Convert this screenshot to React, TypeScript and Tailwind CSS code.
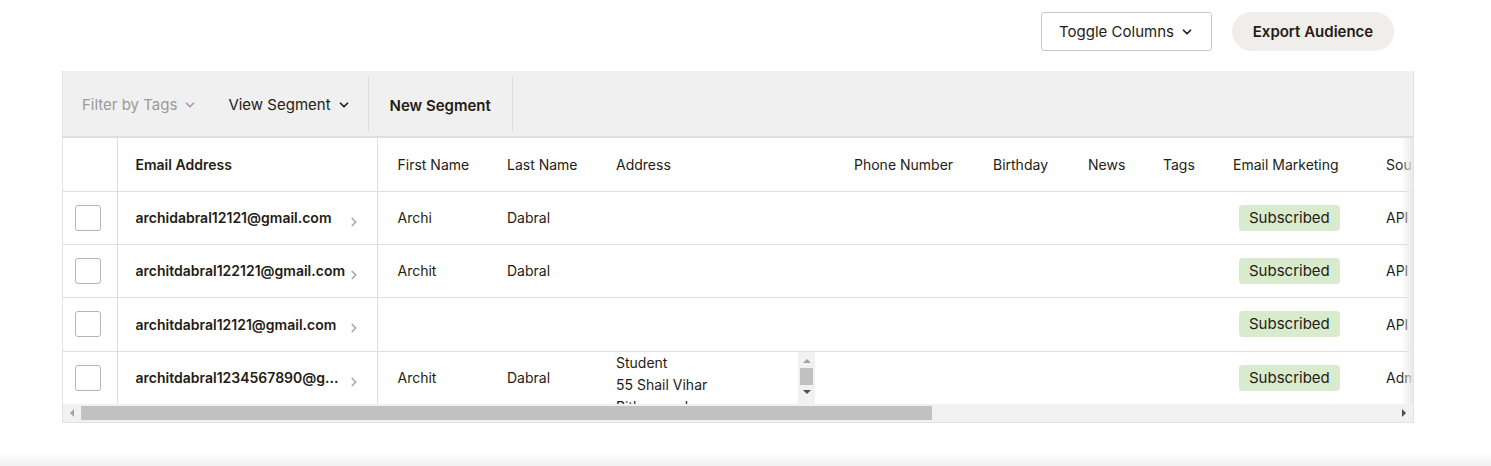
import React from 'react';
import { ChevronDown, ChevronRight } from 'lucide-react';

interface Contact {
  email: string;
  first: string;
  last: string;
  address?: string[];
  source: string;
}

const contacts: Contact[] = [
  { email: 'archidabral12121@gmail.com', first: 'Archi', last: 'Dabral', source: 'API - Generic' },
  { email: 'architdabral122121@gmail.com', first: 'Archit', last: 'Dabral', source: 'API - Generic' },
  { email: 'architdabral12121@gmail.com', first: '', last: '', source: 'API - Generic' },
  {
    email: 'architdabral1234567890@g...',
    first: 'Archit',
    last: 'Dabral',
    address: ['Student', '55 Shail Vihar', 'Pithoragarh', 'Uttarakhand 262501', 'IN'],
    source: 'Admin Add',
  },
];

const headTh = 'h-[53px] border-b border-[#dedede] text-left font-normal align-middle';

// small triangle for the drawn scrollbars
const Arrow: React.FC<{ dir: 'up' | 'down' | 'left' | 'right'; color: string }> = ({ dir, color }) => {
  const pts = {
    up: '0,4 4,0 8,4',
    down: '0,0 8,0 4,4',
    left: '4,0 4,8 0,4',
    right: '0,0 4,4 0,8',
  }[dir];
  const vertical = dir === 'up' || dir === 'down';
  return (
    <svg width={vertical ? 8 : 4} height={vertical ? 4 : 8} viewBox={vertical ? '0 0 8 4' : '0 0 4 8'}>
      <polygon points={pts} fill={color} />
    </svg>
  );
};

const App: React.FC = () => {
  return (
    <div className="w-[1491px] h-[466px] bg-white text-[#241c15] font-['Inter','Liberation_Sans',sans-serif] flex flex-col overflow-hidden">
      {/* Actions */}
      <div className="flex justify-end items-center gap-5 pt-3 pr-[97px] h-[51px]">
        <button className="h-[39px] w-[171px] border border-[#c7c7c7] rounded-[3px] flex items-center justify-center gap-1.5 pt-px text-[15px] text-[#241c15]">
          Toggle Columns
          <ChevronDown className="w-3.5 h-3.5" strokeWidth={3} />
        </button>
        <button className="h-[39px] w-[162px] rounded-full bg-[#efeeea] pt-px text-[15px] font-semibold text-[#241c15]">
          Export Audience
        </button>
      </div>

      {/* Table panel */}
      <div className="ml-[62px] mt-[20px] w-[1352px] border border-[#e2e2e2] border-t-0">
        <div className="h-[67px] bg-[#f0f0f0] border-b-2 border-[#dedede] flex items-center">
          <button className="pl-[19px] pr-[14px] pt-[3px] flex items-center gap-1.5 text-[15px] text-[#9a9a9a]">
            Filter by Tags
            <ChevronDown className="w-3.5 h-3.5" strokeWidth={2.5} />
          </button>
          <button className="pl-[17px] pr-[17px] pt-[3px] flex items-center gap-1.5 text-[15px] text-[#241c15]">
            View Segment
            <ChevronDown className="w-3.5 h-3.5" strokeWidth={3} />
          </button>
          <div className="w-px h-[56px] bg-[#dcdcdc]" />
          <button className="px-[21px] pt-[5px] text-[15px] font-semibold text-[#241c15]">New Segment</button>
          <div className="w-px h-[56px] bg-[#dcdcdc]" />
        </div>

        <div className="relative">
          <div className="overflow-hidden">
            <table className="w-[2090px] table-fixed border-collapse text-[14px]">
              <colgroup>
                <col className="w-[54px]" />
                <col className="w-[260px]" />
                <col className="w-[110px]" />
                <col className="w-[109px]" />
                <col className="w-[238px]" />
                <col className="w-[139px]" />
                <col className="w-[95px]" />
                <col className="w-[75px]" />
                <col className="w-[70px]" />
                <col className="w-[153px]" />
                <col className="w-[200px]" />
                <col className="w-[180px]" />
                <col className="w-[200px]" />
                <col />
              </colgroup>
              <thead>
                <tr>
                  <th className={`${headTh} border-r`} />
                  <th className={`${headTh} border-r pl-[18px] font-semibold`}>Email Address</th>
                  <th className={`${headTh} pl-[20px]`}>First Name</th>
                  <th className={`${headTh} pl-[20px]`}>Last Name</th>
                  <th className={`${headTh} pl-[20px]`}>Address</th>
                  <th className={`${headTh} pl-[20px]`}>Phone Number</th>
                  <th className={`${headTh} pl-[20px]`}>Birthday</th>
                  <th className={`${headTh} pl-[20px]`}>News</th>
                  <th className={`${headTh} pl-[20px]`}>Tags</th>
                  <th className={`${headTh} pl-[20px] whitespace-nowrap`}>Email Marketing</th>
                  <th className={`${headTh} pl-[20px]`}>Source</th>
                  <th className={`${headTh} pl-[20px]`}>Contact Rating</th>
                  <th className={`${headTh} pl-[20px]`}>Date Added</th>
                  <th className={`${headTh} pl-[20px]`}>Last Changed</th>
                </tr>
              </thead>
              <tbody>
                {contacts.map((c, i) => (
                  <tr key={i} className={`${i === 2 ? 'h-[54px]' : 'h-[53px]'} border-b border-[#dedede] last:border-b-0`}>
                    <td className="border-r border-[#dedede] pl-[12px]">
                      <div className="w-[26px] h-[26px] border border-[#b5b5b5] rounded-[3px] bg-white" />
                    </td>
                    <td className="border-r border-[#dedede] pl-[18px]">
                      <div className="flex items-center">
                        <span className="font-semibold whitespace-nowrap w-[211px] overflow-hidden">{c.email}</span>
                        <ChevronRight className="w-3.5 h-3.5 mt-2 text-[#a8a8a8]" strokeWidth={3} />
                      </div>
                    </td>
                    <td className="pl-[20px]">{c.first}</td>
                    <td className="pl-[20px]">{c.last}</td>
                    <td className="pl-[20px] py-0">
                      {c.address && (
                        <div className="h-[52px] w-[199px] flex">
                          <div className="flex-1 overflow-hidden leading-[22px]">
                            {c.address.map((line) => (
                              <div key={line}>{line}</div>
                            ))}
                          </div>
                          <div className="w-[17px] bg-[#f1f1f1] flex flex-col items-center pt-[7px]">
                            <Arrow dir="up" color="#a3a3a3" />
                            <div className="mt-[5px] w-[13px] h-[17px] bg-[#c1c1c1]" />
                            <div className="mt-[5px]">
                              <Arrow dir="down" color="#505050" />
                            </div>
                          </div>
                        </div>
                      )}
                    </td>
                    <td />
                    <td />
                    <td />
                    <td />
                    <td className="pl-[26px]">
                      <span className="inline-block rounded-[4px] bg-[#d9ebcd] px-[10px] py-[3px] text-[15px] leading-[20px]">
                        Subscribed
                      </span>
                    </td>
                    <td className="pl-[20px] whitespace-nowrap">{c.source}</td>
                    <td className="pl-[20px]">★★★★</td>
                    <td className="pl-[20px] whitespace-nowrap">07/14/2021</td>
                    <td className="pl-[20px] whitespace-nowrap">07/14/2021</td>
                  </tr>
                ))}
              </tbody>
            </table>
          </div>
          {/* fade at right edge */}
          <div className="absolute right-0 top-0 bottom-0 w-[12px] bg-gradient-to-r from-transparent to-[#e9e9e9] pointer-events-none" />
        </div>

        {/* horizontal scrollbar */}
        <div className="h-[18px] bg-[#f1f1f1] flex items-center">
          <div className="w-[18px] flex justify-center">
            <Arrow dir="left" color="#a3a3a3" />
          </div>
          <div className="w-[851px] h-[14px] bg-[#c1c1c1]" />
          <div className="flex-1" />
          <div className="w-[18px] flex justify-center">
            <Arrow dir="right" color="#505050" />
          </div>
        </div>
      </div>

      <div className="flex-1" />
      <div className="h-[14px] bg-gradient-to-b from-white to-[#f1f1f1]" />
    </div>
  );
};

export default App;
